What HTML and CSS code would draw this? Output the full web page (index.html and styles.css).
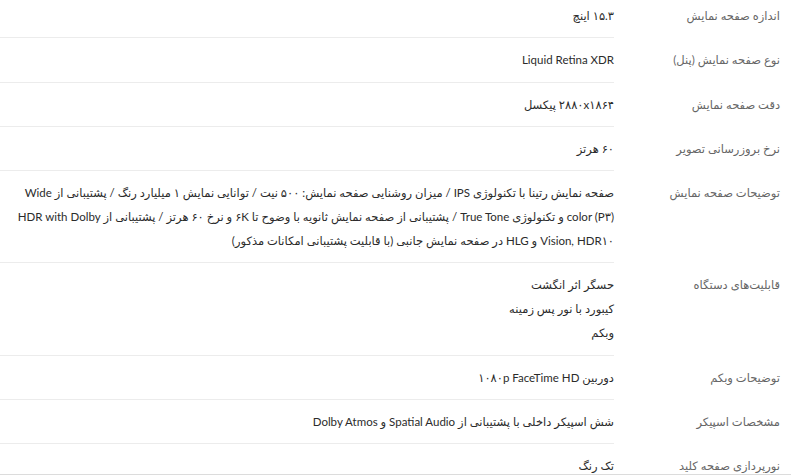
FILE: index.html
```html
<!DOCTYPE html>
<html lang="fa" dir="rtl">
<head>
	<meta charset="utf-8">
	<title>مشخصات</title>
	<link rel="stylesheet" href="styles.css">
</head>
<body>
	<div class="page">
		<div class="specs">
			<div class="row">
				<div class="label">اندازه صفحه نمایش</div>
				<div class="value">۱۵.۳ اینچ</div>
			</div>
			<div class="row">
				<div class="label">نوع صفحه نمایش (پنل)</div>
				<div class="value">Liquid Retina XDR</div>
			</div>
			<div class="row">
				<div class="label">دقت صفحه نمایش</div>
				<div class="value">۲۸۸۰x۱۸۶۴ پیکسل</div>
			</div>
			<div class="row">
				<div class="label">نرخ بروزرسانی تصویر</div>
				<div class="value">۶۰ هرتز</div>
			</div>
			<div class="row">
				<div class="label">توضیحات صفحه نمایش</div>
				<div class="value">صفحه نمایش رتینا با تکنولوژی IPS / میزان روشنایی صفحه نمایش: ۵۰۰ نیت / توانایی نمایش ۱ میلیارد رنگ / پشتیبانی از Wide color (P۳) و تکنولوژی True Tone / پشتیبانی از صفحه نمایش ثانویه با وضوح تا ۶K و نرخ ۶۰ هرتز / پشتیبانی از HDR with Dolby Vision, HDR۱۰ و HLG در صفحه نمایش جانبی (با قابلیت پشتیبانی امکانات مذکور)</div>
			</div>
			<div class="row">
				<div class="label">قابلیت‌های دستگاه</div>
				<div class="value">
					<div>حسگر اثر انگشت</div>
					<div>کیبورد با نور پس زمینه</div>
					<div>وبکم</div>
				</div>
			</div>
			<div class="row">
				<div class="label">توضیحات وبکم</div>
				<div class="value">دوربین ۱۰۸۰p FaceTime HD</div>
			</div>
			<div class="row">
				<div class="label">مشخصات اسپیکر</div>
				<div class="value">شش اسپیکر داخلی با پشتیبانی از Spatial Audio و Dolby Atmos</div>
			</div>
			<div class="row">
				<div class="label">نورپردازی صفحه کلید</div>
				<div class="value">تک رنگ</div>
			</div>
		</div>
	</div>
</body>
</html>
```

FILE: styles.css
```css
html, body {
	margin: 0;
	background: #fff;
	font-family: Lato, "DejaVu Sans", sans-serif;
	font-size: 11.5px;
}
.page {
	height: 474px;
	overflow: hidden;
	border-bottom: 1px solid #dcdcdc;
}
.specs {
	margin-top: -6px;
}
.row {
	display: flex;
}
.label {
	width: 166px;
	padding: 10px 11px 9.3px 0;
	line-height: 24px;
	color: #666;
	flex-shrink: 0;
}
.value {
	flex: 1;
	padding: 10px 0 9.3px 8px;
	line-height: 24px;
	color: #2b2b2b;
	border-bottom: 1px solid #ececec;
}
```
